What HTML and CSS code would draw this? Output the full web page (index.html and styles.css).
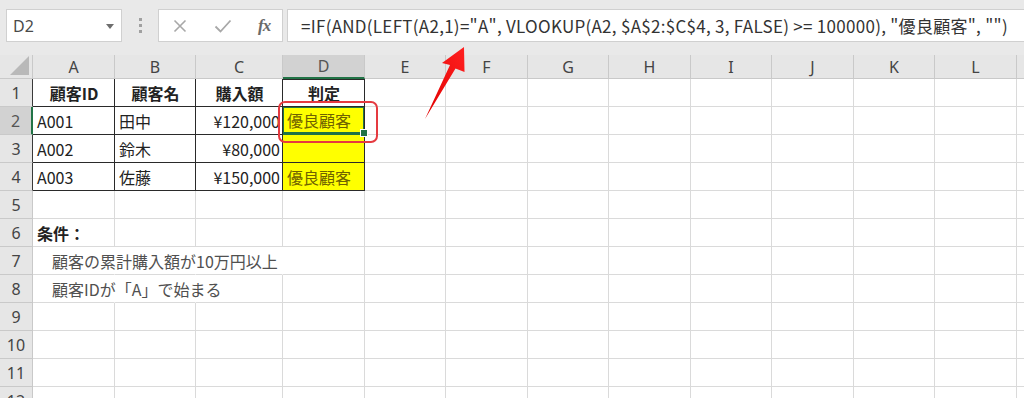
FILE: index.html
```html
<!DOCTYPE html>
<html lang="ja">
<head>
<meta charset="utf-8">
<title>Excel</title>
<link rel="stylesheet" href="styles.css">
</head>
<body>
<div class="app">
  <div class="toolbar">
    <div class="namebox">
      <span class="nb-text">D2</span>
      <svg class="nb-arrow" width="8" height="5" viewBox="0 0 8 5"><path d="M0 0h8L4 5z" fill="#6e6e6e"/></svg>
    </div>
    <div class="grip"><i></i><i></i><i></i></div>
    <div class="fbtns">
      <svg class="ic" width="14" height="14" viewBox="0 0 14 14"><path d="M1.5 1.5l11 11M12.5 1.5l-11 11" stroke="#a8a8a8" stroke-width="1.6" fill="none"/></svg>
      <svg class="ic" width="18" height="14" viewBox="0 0 18 14"><path d="M1.5 7.5l5 5L16.5 1.5" stroke="#a8a8a8" stroke-width="1.8" fill="none"/></svg>
      <span class="fx">fx</span>
    </div>
    <div class="formula">=IF(AND(LEFT(A2,1)="A", VLOOKUP(A2, $A$2:$C$4, 3, FALSE) &gt;= 100000), "優良顧客", "")</div>
  </div>

  <div class="sheet">
    <div class="corner"><span class="tri"></span></div>
    <div class="ch">A</div><div class="ch">B</div><div class="ch">C</div><div class="ch sel">D</div><div class="ch">E</div><div class="ch">F</div><div class="ch">G</div><div class="ch">H</div><div class="ch">I</div><div class="ch">J</div><div class="ch">K</div><div class="ch">L</div><div class="ch"></div>

    <div class="rh rt">1</div>
    <div class="c t b ctr">顧客ID</div><div class="c t b ctr">顧客名</div><div class="c t b ctr">購入額</div><div class="c t b ctr top">判定</div>
    <div class="c"></div><div class="c"></div><div class="c"></div><div class="c"></div><div class="c"></div><div class="c"></div><div class="c"></div><div class="c"></div><div class="c"></div>

    <div class="rh sel">2</div>
    <div class="c t">A001</div><div class="c t">田中</div><div class="c t r">¥120,000</div><div class="c t y cur">優良顧客</div>
    <div class="c"></div><div class="c"></div><div class="c"></div><div class="c"></div><div class="c"></div><div class="c"></div><div class="c"></div><div class="c"></div><div class="c"></div>

    <div class="rh rt">3</div>
    <div class="c t">A002</div><div class="c t">鈴木</div><div class="c t r">¥80,000</div><div class="c t y"></div>
    <div class="c"></div><div class="c"></div><div class="c"></div><div class="c"></div><div class="c"></div><div class="c"></div><div class="c"></div><div class="c"></div><div class="c"></div>

    <div class="rh rt">4</div>
    <div class="c t">A003</div><div class="c t">佐藤</div><div class="c t r">¥150,000</div><div class="c t y">優良顧客</div>
    <div class="c"></div><div class="c"></div><div class="c"></div><div class="c"></div><div class="c"></div><div class="c"></div><div class="c"></div><div class="c"></div><div class="c"></div>

    <div class="rh">5</div>
    <div class="c"></div><div class="c"></div><div class="c"></div><div class="c"></div><div class="c"></div><div class="c"></div><div class="c"></div><div class="c"></div><div class="c"></div><div class="c"></div><div class="c"></div><div class="c"></div><div class="c"></div>

    <div class="rh">6</div>
    <div class="c b">条件：</div><div class="c"></div><div class="c"></div><div class="c"></div><div class="c"></div><div class="c"></div><div class="c"></div><div class="c"></div><div class="c"></div><div class="c"></div><div class="c"></div><div class="c"></div><div class="c"></div>

    <div class="rh">7</div>
    <div class="c nr ind g">顧客の累計購入額が10万円以上</div><div class="c nr"></div><div class="c nr"></div><div class="c"></div><div class="c"></div><div class="c"></div><div class="c"></div><div class="c"></div><div class="c"></div><div class="c"></div><div class="c"></div><div class="c"></div><div class="c"></div>

    <div class="rh">8</div>
    <div class="c nr ind g">顧客IDが「A」で始まる</div><div class="c nr"></div><div class="c"></div><div class="c"></div><div class="c"></div><div class="c"></div><div class="c"></div><div class="c"></div><div class="c"></div><div class="c"></div><div class="c"></div><div class="c"></div><div class="c"></div>

    <div class="rh">9</div>
    <div class="c"></div><div class="c"></div><div class="c"></div><div class="c"></div><div class="c"></div><div class="c"></div><div class="c"></div><div class="c"></div><div class="c"></div><div class="c"></div><div class="c"></div><div class="c"></div><div class="c"></div>

    <div class="rh">10</div>
    <div class="c"></div><div class="c"></div><div class="c"></div><div class="c"></div><div class="c"></div><div class="c"></div><div class="c"></div><div class="c"></div><div class="c"></div><div class="c"></div><div class="c"></div><div class="c"></div><div class="c"></div>

    <div class="rh">11</div>
    <div class="c"></div><div class="c"></div><div class="c"></div><div class="c"></div><div class="c"></div><div class="c"></div><div class="c"></div><div class="c"></div><div class="c"></div><div class="c"></div><div class="c"></div><div class="c"></div><div class="c"></div>

    <div class="rh">12</div>
    <div class="c"></div><div class="c"></div><div class="c"></div><div class="c"></div><div class="c"></div><div class="c"></div><div class="c"></div><div class="c"></div><div class="c"></div><div class="c"></div><div class="c"></div><div class="c"></div><div class="c"></div>
  </div>

  <div class="redbox"></div>
  <svg class="arrow" width="50" height="80" viewBox="0 0 50 80">
    <defs>
      <linearGradient id="ag" x1="0" y1="1" x2="1" y2="0">
        <stop offset="0" stop-color="#e00000"/>
        <stop offset="1" stop-color="#ff2020"/>
      </linearGradient>
    </defs>
    <polygon points="44,3 44.5,28 35.5,24.5 5,75 30,21 22,19" fill="url(#ag)"/>
  </svg>
</div>
</body>
</html>
```

FILE: styles.css
```css
* { box-sizing: border-box; }

html, body {
  margin: 0;
  padding: 0;
  background: #ffffff;
}

body {
  font-family: "Noto Sans CJK JP", "Noto Sans", sans-serif;
  color: #222;
  width: 1024px;
  height: 398px;
  overflow: hidden;
}

.app {
  position: relative;
  width: 1024px;
  height: 398px;
  overflow: hidden;
}

/* ---------- formula bar ---------- */
.toolbar {
  height: 55px;
  background: #e9e9e9;
  display: flex;
  align-items: flex-start;
  padding-top: 9px;
  padding-left: 6px;
}

.namebox {
  width: 116px;
  height: 33px;
  background: #fff;
  border: 1px solid #d0d0d0;
  display: flex;
  align-items: center;
  justify-content: space-between;
  padding: 0 7px 0 6px;
}

.nb-text {
  font-family: "Noto Sans", sans-serif;
  font-size: 16px;
  color: #4a4a4a;
}

.nb-arrow { margin-top: 1px; }

.grip {
  width: 36px;
  height: 33px;
  display: flex;
  flex-direction: column;
  align-items: center;
  justify-content: center;
  gap: 3px;
}

.grip i {
  display: block;
  width: 3px;
  height: 3px;
  background: #a0a0a0;
}

.fbtns {
  width: 125px;
  height: 33px;
  background: #fff;
  border: 1px solid #d0d0d0;
  display: flex;
  align-items: center;
  padding-left: 14px;
  gap: 0;
}

.fbtns .ic:first-child { margin-right: 27px; }
.fbtns .ic:nth-child(2) { margin-right: 26px; }

.fx {
  font-family: "Liberation Serif", serif;
  font-style: italic;
  font-weight: bold;
  font-size: 17px;
  color: #6a6a6a;
  letter-spacing: -1px;
}

.formula {
  flex: 1;
  margin-left: 4px;
  height: 33px;
  background: #fff;
  border: 1px solid #d0d0d0;
  border-right: none;
  padding-left: 13px;
  display: flex;
  align-items: center;
  font-size: 17px;
  letter-spacing: 0.28px;
  color: #333;
  white-space: nowrap;
  overflow: hidden;
}

/* ---------- sheet ---------- */
.sheet {
  display: grid;
  grid-template-columns: 33px 82px 81px 87px 82px 81px 82px 81px 82px 81px 82px 81px 82px 40px;
  grid-template-rows: 24px repeat(12, 28px);
  font-size: 16px;
}

.corner {
  background: #e6e6e6;
  border-right: 1px solid #c9c9c9;
  border-bottom: 1px solid #c9c9c9;
  position: relative;
}

.tri {
  position: absolute;
  right: 3px;
  bottom: 3px;
  width: 0;
  height: 0;
  border-left: 19px solid transparent;
  border-bottom: 19px solid #b9b9b9;
}

.ch {
  background: #e6e6e6;
  border-right: 1px solid #c9c9c9;
  border-bottom: 1px solid #c9c9c9;
  display: flex;
  align-items: center;
  justify-content: center;
  color: #444;
  font-family: "Noto Sans", sans-serif;
  font-size: 16px;
}

.ch.sel {
  background: #d2d2d2;
  border-bottom: 2px solid #217346;
  color: #555;
}

.rh {
  background: #e6e6e6;
  border-right: 1px solid #c9c9c9;
  border-bottom: 1px solid #c9c9c9;
  display: flex;
  align-items: center;
  justify-content: center;
  color: #444;
  font-family: "Noto Sans", sans-serif;
  font-size: 16px;
}

.rh.rt { border-right-color: #3a3a3a; }

.rh.sel {
  background: #d2d2d2;
  border-right: 2px solid #217346;
  color: #555;
}

.c {
  border-right: 1px solid #dadada;
  border-bottom: 1px solid #dadada;
  display: flex;
  align-items: center;
  padding: 0 3px 0 4px;
  white-space: nowrap;
  overflow: visible;
  color: #222;
}

.c.t {
  border-right-color: #2a2a2a;
  border-bottom-color: #2a2a2a;
}

.c.top { box-shadow: inset 0 1px 0 #2a2a2a; }

.c.b { font-weight: bold; }
.c.ctr { justify-content: center; }
.c.r { justify-content: flex-end; padding-right: 2px; }

.c.y {
  background: #ffff00;
  color: #6f6200;
}

.c.nr { border-right-color: transparent; }
.c.ind { padding-left: 19px; }
.c.g { color: #505050; }

.c.cur {
  position: relative;
  box-shadow: inset 0 0 0 1px #217346;
  border-bottom: 2px solid #217346;
}

.c.cur::after {
  content: "";
  position: absolute;
  right: -4px;
  bottom: -4px;
  width: 6px;
  height: 6px;
  background: #217346;
  border: 1px solid #fff;
}

/* ---------- annotations ---------- */
.redbox {
  position: absolute;
  left: 278px;
  top: 101px;
  width: 100px;
  height: 42px;
  border: 2px solid #e53a40;
  border-radius: 7px;
}

.arrow {
  position: absolute;
  left: 420px;
  top: 44px;
}
```
